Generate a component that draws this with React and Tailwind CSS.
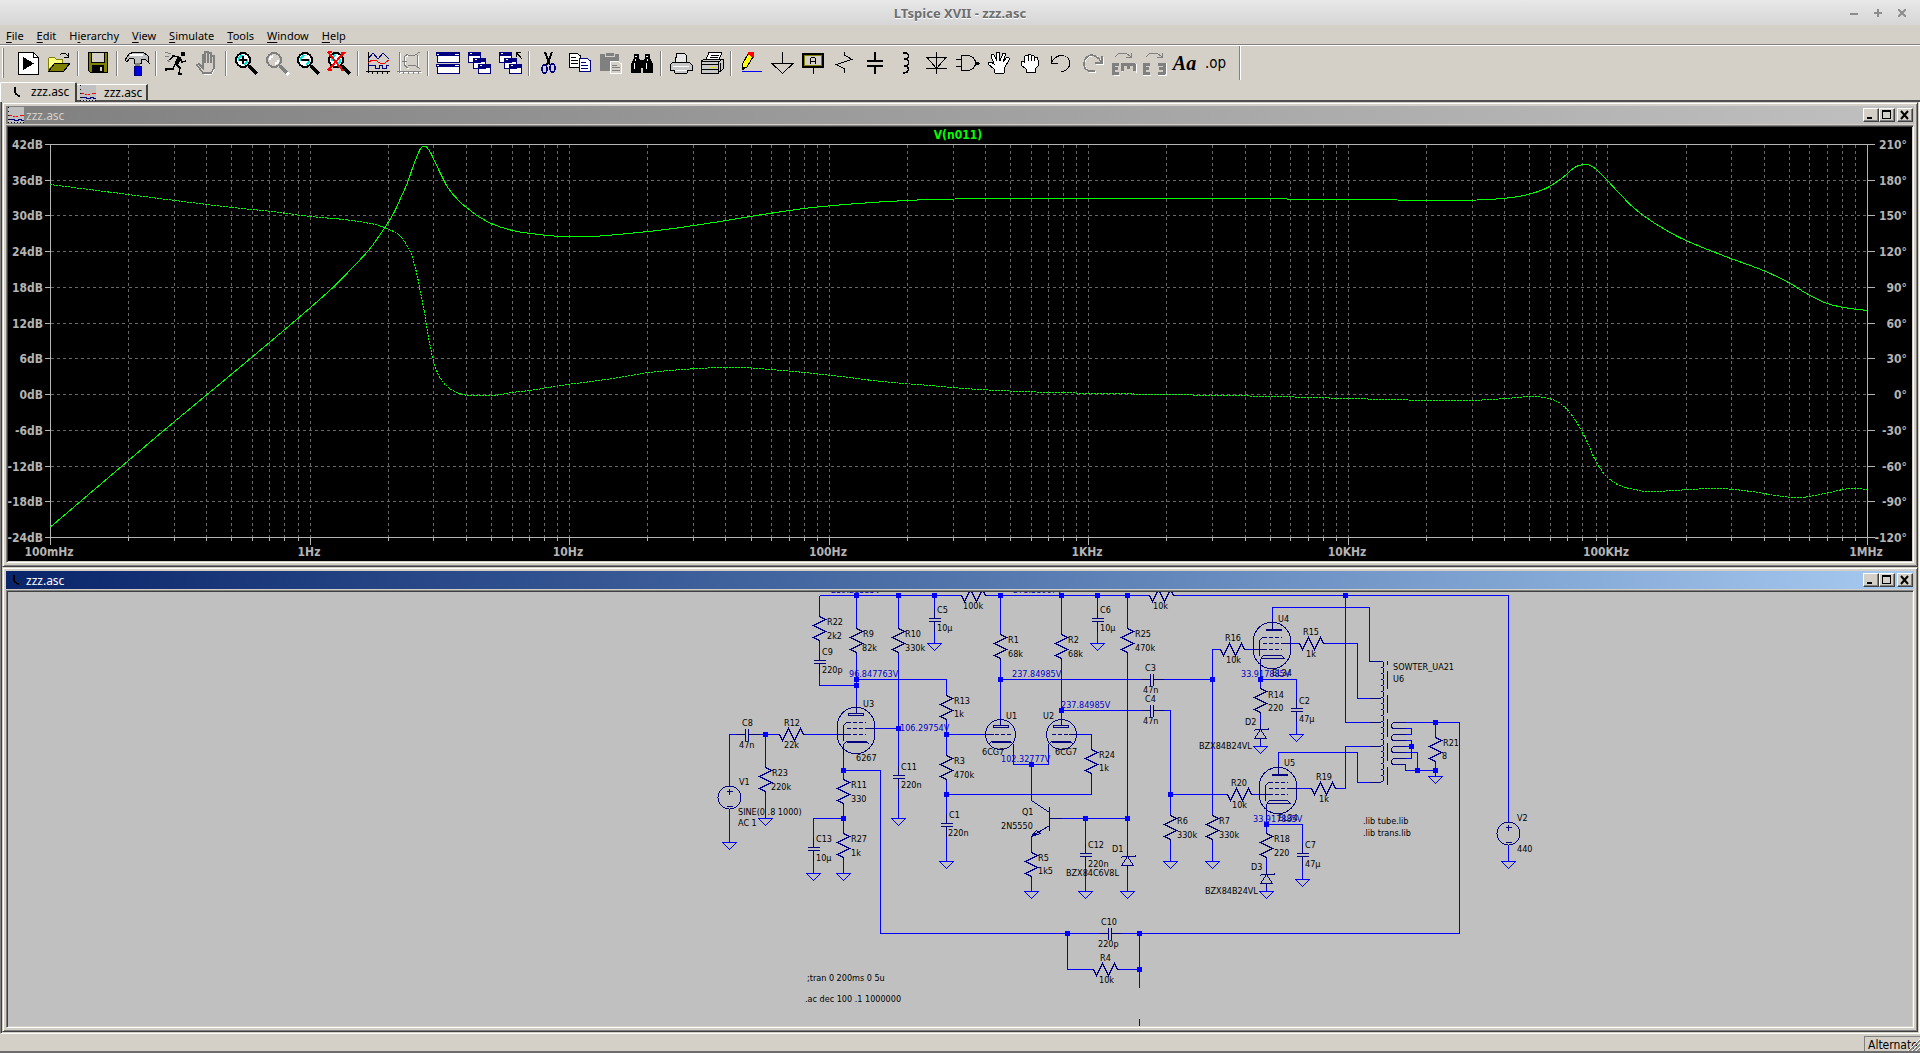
import { useState } from "react";

const GREY = "#808080";
const NAVY = "#000080";

/* ---------- toolbar icons, all on a 24x24 grid ---------- */

const Magnifier = ({ color = "#000", glass = "#d4d0c8", children }) => (
  <>
    <circle cx="9" cy="9" r="7" fill={glass} stroke={color} strokeWidth="2" />
    <path d="M5 10V7L8 4M13 8V11L10 14" stroke="#00e5e5" strokeWidth="2" fill="none" />
    <path d="M15 15L23 23" stroke={color} strokeWidth="3" />
    {children}
  </>
);

const Cascade = () => (
  <>
    <path d="M1 1H13V11H1ZM6 7H18V17H6ZM11 13H23V22H11Z" fill="#fff" stroke={NAVY} />
    <path d="M1 1H13V4H1ZM6 7H18V10H6ZM11 13H23V16H11Z" fill={NAVY} stroke={NAVY} />
    <path d="M3 2.5H5M8 8.5H10M13 14.5H15" stroke="#fff" />
  </>
);

const Hand = ({ open }) =>
  open ? (
    <path
      d="M8 22L7 18L1 13L1 11L4 11L7 13L4 5L5 3L7 4L10 10L9 1L12 1L13 10L16 2L18 2L18 5L16 11L20 6L22 7L22 9L18 16L17 22Z"
      fill="#fff"
      stroke="#000"
    />
  ) : (
    <path
      d="M8 21V18L3 14V10L6 10V6L8 4L10 5L11 3L13 4L15 4L17 6L19 6L20 9V15L17 18V21Z M10 5V10M13 4V10M16 6V10M6 10V12"
      fill="#fff"
      stroke="#000"
    />
  );

const icons = {
  Run: (
    <>
      <path d="M2 1H17L22 6V23H2Z" fill="#fff" stroke="#000" />
      <path d="M17 1V6H22" fill="none" stroke="#000" />
      <path d="M7 6V19L18 12.5Z" fill="#000" />
    </>
  ),
  Open: (
    <>
      <path d="M1 20V8L3 6H7L9 8H15V12H8Z" fill="#ffff80" stroke="#808000" />
      <path d="M2 20L8 12H23L17 20Z" fill="#808000" stroke="#000" />
      <path d="M13 4L15 2H18L21 5M21 2V6H17" fill="none" stroke="#000" />
    </>
  ),
  Save: (
    <>
      <path d="M2 1H21V21H4L2 19Z" fill="#808000" stroke="#000" />
      <path d="M5 1H18V11H5Z" fill="#d4d0c8" stroke="#000" />
      <path d="M6 14H18V21H6Z" fill="#000" />
      <path d="M14 16H16V20H14Z" fill="#d4d0c8" />
    </>
  ),
  "Control Panel": (
    <>
      <path d="M0 9L4 3L9 1H18L23 5L24 12L20 8L16 8V12H9V8L5 7L2 11Z" fill="#c0c0c0" stroke="#000" />
      <path d="M5 4H18" stroke="#fff" strokeWidth="2" />
      <path d="M10 12H15V15H10Z" fill="#808080" />
      <path d="M9 15H16V24H9Z" fill="#0000e0" stroke={NAVY} />
    </>
  ),
  Simulate: (
    <>
      <circle cx="19" cy="3" r="2.5" fill="#000" />
      <path d="M16 6L12 13" stroke="#000" strokeWidth="4" />
      <path d="M15 6L9 5L6 9M16 7L18 11L22 10M12 13L16 17L15 23H18M11 13L9 18L2 18V20" fill="none" stroke="#000" strokeWidth="1.5" />
      <path d="M1 1L7 3M1 5L5 6M3 9L6 11" stroke={GREY} />
    </>
  ),
  Halt: (
    <>
      <path d="M8 23L2 14L4 13L8 17V4H10V12V2H13V12V3H16V12V6H19V17L16 23Z" fill="#fff" transform="translate(1 1)" />
      <path d="M8 22L2 14L4 13L8 17V4H10V12V1H13V12V2H16V12V5H19V17L16 22Z" fill="#d4d0c8" stroke={GREY} strokeWidth="1.5" />
    </>
  ),
  "Zoom in": (
    <Magnifier glass="#fff">
      <path d="M5 9H13M9 5V13" stroke="#000" strokeWidth="2" />
    </Magnifier>
  ),
  Pan: (
    <>
      <path d="M16 16L24 24" stroke="#fff" strokeWidth="3" />
      <circle cx="9" cy="9" r="7" fill="none" stroke={GREY} strokeWidth="2" />
      <path d="M5 9V7L8 5M13 9V11L10 13" stroke="#fff" strokeWidth="2" fill="none" />
      <path d="M15 15L22 22" stroke={GREY} strokeWidth="3" />
    </>
  ),
  "Zoom out": (
    <Magnifier glass="#fff">
      <path d="M5 9H13" stroke="#000" strokeWidth="2" />
    </Magnifier>
  ),
  "Zoom to fit": (
    <Magnifier glass="#fff">
      <path d="M1 1L16 20M18 1L1 19M1 1H5M14 2H18M1 19H5" stroke="#f00" strokeWidth="2" />
    </Magnifier>
  ),
  "Pick visible traces": (
    <>
      <path d="M2.5 1V22M0 20.5H24M6.5 20V23M11.5 20V23M16.5 20V23M21.5 20V23" stroke="#000" fill="none" />
      <path d="M2 8L7 2L12 8L17 2L23 8" stroke={NAVY} fill="none" />
      <path d="M2 12L6 9L9 9L14 12H19L23 9" stroke="#f00" fill="none" />
      <path d="M2 14.500H9.500V17.500H13.500V14.500H16.500V17.500H20.500V14.500H23" stroke={NAVY} fill="none" />
    </>
  ),
  Autorange: (
    <>
      <path d="M3.5 2V23M1 21.5H25" stroke="#fff" />
      <path d="M2.5 1V22M0 20.5H24M6.5 20V23M11.5 20V23M16.5 20V23M21.5 20V23" stroke={GREY} />
      <path d="M12 4L8 7V15L12 18M21 5V16" stroke="#fff" fill="none" />
      <path d="M11 3L7 6V14L11 17M23 1L18 4L11 5M23 18L18 14L11 15M20 4V15M5 10H10" stroke={GREY} fill="none" />
    </>
  ),
  "Tile windows": (
    <>
      <path d="M1 2H23V11H1ZM1 14H23V22H1Z" fill="#fff" stroke={NAVY} />
      <path d="M0 1H24V5H0ZM0 13H24V16H0Z" fill={NAVY} />
      <path d="M1 3H3M19 3H23M1 14.5H3M19 14.5H23" stroke="#fff" />
    </>
  ),
  "Cascade windows": <Cascade />,
  "Close all": (
    <>
      <Cascade />
      <path d="M15 0H24V6H15Z" fill="#d4d0c8" />
      <path d="M18.5 1V6M18 1.5H23M18 1L24 8" stroke="#000" fill="none" />
    </>
  ),
  Cut: (
    <>
      <path d="M8 1L13 14M15 1L10 14" stroke="#000" strokeWidth="2" />
      <ellipse cx="7.5" cy="18" rx="2.5" ry="4" fill="none" stroke={NAVY} strokeWidth="1.5" />
      <ellipse cx="15.5" cy="17" rx="2.5" ry="4" fill="none" stroke={NAVY} strokeWidth="1.5" />
    </>
  ),
  Copy: (
    <>
      <path d="M1.5 2.5H9L12.5 5V16.5H1.5Z" fill="#fff" stroke="#000" />
      <path d="M3 6.5H8M3 9.5H10M3 12.5H10" stroke="#000" />
      <path d="M11.5 7.5H19L22.5 10V20.5H11.5Z" fill="#fff" stroke={NAVY} />
      <path d="M13 11.5H18M13 14.5H20M13 17.5H20" stroke={NAVY} />
    </>
  ),
  Paste: (
    <>
      <path d="M1 3H20V20H1Z" fill={GREY} />
      <path d="M6 1H15V5H6Z" fill={GREY} stroke="#d4d0c8" />
      <path d="M11.5 10.5H19L22.5 13V22.5H11.5Z" fill="#d4d0c8" stroke="#fff" />
      <path d="M13 14.5H18M13 16.5H21M13 19.5H21" stroke={GREY} />
    </>
  ),
  Find: (
    <>
      <path d="M4 3H9V7L11 12V22H1V13L4 7ZM15 3H20V7L23 13V22H13V12L15 7Z" fill="#000" />
      <path d="M10 9H14V17H10Z" fill="#000" />
      <path d="M5 5H7M16 5H18M4 12V18M16 12V18M5 8V10M17 8V10" stroke="#fff" />
    </>
  ),
  Print: (
    <>
      <path d="M6 11L8 2H15L18 5L17 11" fill="#e8e8e8" stroke="#000" />
      <path d="M1 14L4 11H20L23 14V19H19L18 22H6L5 19H1Z" fill="#c8c8c8" stroke="#000" />
      <path d="M4 15H20M6 19H18" stroke="#fff" />
    </>
  ),
  "Print setup": (
    <>
      <path d="M6 9L9 1H22L19 9" fill="#fff" stroke="#000" />
      <path d="M11 4H19M10 6H18" stroke="#000" />
      <path d="M1 10H18V22H1ZM1 10L5 8H23L18 11M23 8V18L18 22" fill="#c8c8c8" stroke="#000" />
      <path d="M1 13H18M1 18H18M20 12V19" stroke="#000" />
      <path d="M10 16H15" stroke="#e0e000" />
    </>
  ),
  Wire: (
    <>
      <path d="M3 14L9 3L14 6L8 16L3 18Z" fill="#ff0" stroke="#000" />
      <path d="M9 3L10 1H14V6Z" fill="#f00" stroke="#f00" />
      <path d="M3 15V19L6 17" fill="#000" stroke="#000" />
      <path d="M3 20.5H23" stroke="#00f" />
    </>
  ),
  Ground: <path d="M12.5 1V12M1 12H24M2 12.5L12.5 22.5L23 12.5" fill="none" stroke="#000" />,
  "Label net": (
    <>
      <path d="M2 3H22V16H2Z" fill="none" stroke="#000" strokeWidth="2" />
      <path d="M3.5 4.5H20.500V14.500H3.500Z" fill="none" stroke="#808000" />
      <path d="M9.5 13V7.500L10.500 6.500H13.500L14.500 7.500V13M9 10.500H15M12.500 16V23" fill="none" stroke="#000" />
    </>
  ),
  Resistor: <path d="M12.5 1V4L20 8.500L4.500 13.500L12.500 18V22" fill="none" stroke="#000" />,
  Capacitor: <path d="M12 1V9M4 10H20M4 15H20M12 15V23" fill="none" stroke="#000" strokeWidth="2" />,
  Inductor: <path d="M9 2H11C16 2 16 8 10 8C16 8 16 15 10 15C16 15 16 22 9 22" fill="none" stroke="#000" strokeWidth="1.5" />,
  Diode: <path d="M11.5 1V23M1 6.500H22M1 17.500H22M2 6.500L11.500 17.500L21 6.500" fill="none" stroke="#000" />,
  Component: (
    <>
      <path d="M5.5 4.5H12C17 4.500 19.500 9 19.500 12C19.500 15 17 19.500 12 19.500H5.500Z" fill="none" stroke="#000" />
      <path d="M0 8.5H5M0 15.5H5M19 12H24" stroke="#000" />
      <path d="M20 11H23V14H20Z" fill="#000" />
    </>
  ),
  Move: <Hand open />,
  Drag: <Hand />,
  Undo: <path d="M2.5 5V12.5H9M2.500 12C5 6 9 4.500 13 4.500C22 5 24 17 14 20.500H12" fill="none" stroke="#000" />,
  Redo: (
    <>
      <path d="M23 6V13H16M22 12C18 5 14 4 11 5C3 7 2 17 10 21H16" fill="none" stroke="#fff" strokeWidth="1.5" />
      <path d="M22 5V12H15M22 12C18 5 14 4 11 4C3 6 1 17 9 20H15" fill="none" stroke={GREY} strokeWidth="1.5" />
    </>
  ),
  Rotate: (
    <>
      <path d="M3 24H9M11 21V17M25 13V22" fill="none" stroke="#fff" />
      <path d="M2 12V23M1 13H8M2 17H7M1 22H8M10 13H24M11 13V20M17 13V18M23 13V20" stroke={GREY} strokeWidth="3" fill="none" />
      <path d="M4 6L8 2H15L20 6M20 2V6H15" fill="none" stroke={GREY} />
    </>
  ),
  Mirror: (
    <>
      <path d="M1 24H9M16 24H24V12" fill="none" stroke="#fff" />
      <path d="M2 12V23M1 13H8M2 17H7M1 22H8M22 12V23M16 13H23M17 17H23M16 22H23" stroke={GREY} strokeWidth="3" fill="none" />
      <path d="M4 6L8 2H15L20 6M20 2V6H15" fill="none" stroke={GREY} />
    </>
  ),
};

const toolbar = [
  ["Run", "Open"],
  ["Save"],
  ["Control Panel"],
  ["Simulate", "Halt"],
  ["Zoom in", "Pan", "Zoom out", "Zoom to fit"],
  ["Pick visible traces", "Autorange"],
  ["Tile windows", "Cascade windows", "Close all"],
  ["Cut", "Copy", "Paste", "Find"],
  ["Print", "Print setup"],
  ["Wire", "Ground", "Label net", "Resistor", "Capacitor", "Inductor", "Diode", "Component", "Move", "Drag", "Undo", "Redo", "Rotate", "Mirror", "Text", "SPICE directive"],
];

const Separator = () => (
  <div className="flex w-2 justify-center">
    <div className="h-[25px] w-[2px] border-l border-[#808080] bg-white" />
  </div>
);

const ToolButton = ({ name }) => (
  <button type="button" aria-label={name} className="flex h-[30px] w-[31px] items-center justify-center">
    {name === "Text" && <span className="font-['Liberation_Serif'] text-[20px] leading-none font-bold italic">Aa</span>}
    {name === "SPICE directive" && <span className="font-['DejaVu_Sans_Condensed','DejaVu_Sans'] text-[15px] leading-none">.op</span>}
    {icons[name] && (
      <svg viewBox="0 0 24 24" className="size-6 overflow-visible" shapeRendering="crispEdges">
        {icons[name]}
      </svg>
    )}
  </button>
);

const Toolbar = () => (
  <div className="flex h-[34px] shrink-0 items-center overflow-hidden">
    <div className="mr-2 ml-[2px] h-[30px] w-[2px] border-r border-[#808080] bg-white" />
    {toolbar.map((group, i) => (
      <div key={i} className="flex shrink-0 items-center">
        {i > 0 && <Separator />}
        {group.map((name) => (
          <ToolButton key={name} name={name} />
        ))}
      </div>
    ))}
    <div className="ml-2 h-full w-[2px] border-l border-[#808080] bg-white" />
  </div>
);

/* ---------- window chrome ---------- */

const PlotIcon = () => (
  <svg viewBox="0 0 16 16" className="size-4 shrink-0" shapeRendering="crispEdges">
    <path d="M0 0H16V16H0Z" fill="#c0c0c0" />
    <path d="M0.5 0V16" stroke="#000" strokeDasharray="1 3" />
    <path d="M1 8.5H4M5 9.5H7M8 9.5H10M12 8.5H16" stroke="#f00" fill="none" />
    <path d="M1 12.5H6V13.5H10V12.5H13V13.5H16" stroke={NAVY} fill="none" />
    <path d="M0 15.5H16" stroke="#000" strokeDasharray="1 2" />
  </svg>
);

const SchematicIcon = () => (
  <svg viewBox="0 0 16 16" className="size-4 shrink-0" shapeRendering="crispEdges">
    <path d="M5 3H7V9H5ZM6 9H8V11H6ZM8 10H9V12H8ZM9 11H11V13H9Z" fill="#000" />
  </svg>
);

const CaptionButton = ({ label, children }) => (
  <button
    type="button"
    aria-label={label}
    className="flex h-[14px] w-4 items-center justify-center border border-t-white border-r-[#404040] border-b-[#404040] border-l-white bg-[#d4d0c8] shadow-[inset_-1px_-1px_#808080]"
  >
    <svg viewBox="0 0 14 12" className="h-3 w-[14px]" fill="none" stroke="#000" shapeRendering="crispEdges">
      {children}
    </svg>
  </button>
);

const MdiWindow = ({ title, active, icon, children }) => (
  <section className="flex min-h-0 flex-1 flex-col border border-t-[#d4d0c8] border-r-[#404040] border-b-[#404040] border-l-[#d4d0c8] bg-[#d4d0c8] p-[3px] shadow-[inset_1px_1px_#fff,inset_-1px_-1px_#808080]">
    <header
      className={
        "mb-px flex h-[18px] shrink-0 items-center bg-linear-to-r pr-px pl-[2px] font-['Noto_Sans'] text-[12px] leading-4 " +
        (active ? "from-[#0a246a] to-[#a6caf0] text-white" : "from-[#808080] to-[#c0c0c0] text-[#d4d0c8]")
      }
    >
      {icon}
      <h2 className="flex-1 pt-[2px] pl-[2px]">{title}</h2>
      <CaptionButton label="Minimize">
        <path d="M3 9H8" strokeWidth="2" />
      </CaptionButton>
      <CaptionButton label="Maximize">
        <path d="M2.5 2.5H10.5V9.5H2.5Z" />
        <path d="M2 2H11" strokeWidth="2" />
      </CaptionButton>
      <div className="w-[2px]" />
      <CaptionButton label="Close">
        <path d="M3 2L10 10M10 2L3 10" strokeWidth="2" shapeRendering="auto" />
      </CaptionButton>
    </header>
    <div className="min-h-0 flex-1 border border-t-[#808080] border-r-white border-b-white border-l-[#808080] p-px shadow-[inset_1px_1px_#404040,inset_-1px_-1px_#d4d0c8]">
      {children}
    </div>
  </section>
);

/* ---------- bode plot ---------- */

const X0 = 50;
const X1 = 1867;
const Y0 = 144;
const Y1 = 537;
const decade = (X1 - X0) / 7;
const dbLabels = [42, 36, 30, 24, 18, 12, 6, 0, -6, -12, -18, -24];
const degLabels = [210, 180, 150, 120, 90, 60, 30, 0, -30, -60, -90, -120];
const freqLabels = ["100mHz", "1Hz", "10Hz", "100Hz", "1KHz", "10KHz", "100KHz", "1MHz"];
const rowY = (i) => Math.round(Y0 + ((Y1 - Y0) * i) / 11);

const gain = [
  [50, 526.5], [118, 468.5], [174, 421], [232, 373], [282, 331], [310, 307],
  [334, 285.5], [354, 265], [370, 247.5], [384, 227.5], [393, 213], [400, 198], [407, 182], [414, 162], [419.5, 149], [422.5, 146],
  [425.5, 146], [430, 152], [434, 160.5], [441, 175], [448, 188], [459, 201], [468, 208.5], [478, 216], [493, 224], [512, 230],
  [530, 233], [560, 236], [590, 236], [612, 234.5], [661, 229.5], [710, 222.5], [759, 214.5], [808, 207.5], [857, 203], [906, 200],
  [955, 198.5], [1078, 198], [1224, 198], [1347, 199], [1445, 200], [1488, 199], [1518, 196], [1543, 189], [1561, 178],
  [1574, 167], [1583, 164], [1592, 166], [1604, 177], [1619, 193], [1634, 208], [1653, 222], [1677, 236], [1702, 247],
  [1733, 259], [1763, 270], [1788, 282], [1806, 293], [1824, 302], [1843, 307], [1867, 310],
];

const phase = [
  [50, 184], [96, 190], [128, 194], [174, 200], [232, 207], [271, 211], [310, 216], [343, 219], [364, 222], [378, 225],
  [393, 231], [400, 236], [407, 246], [411, 254], [416, 272], [420, 292], [424, 312], [426, 325], [429, 342], [434, 364],
  [440, 378], [448, 387], [459, 393], [470, 395], [493, 395], [512, 392], [536, 389], [560, 385], [612, 378], [649, 372],
  [698, 368], [735, 367], [771, 369], [832, 375], [881, 381], [930, 385], [979, 389], [1053, 392], [1163, 394], [1273, 396],
  [1347, 398], [1432, 400], [1469, 400], [1506, 398], [1530, 396], [1549, 398], [1561, 404], [1573, 417], [1585, 438],
  [1595, 460], [1606, 476], [1619, 485], [1634, 489], [1653, 491], [1714, 488], [1751, 491], [1775, 495], [1800, 497],
  [1824, 493], [1849, 488], [1867, 489],
];

// Catmull-Rom through the sampled points
const smooth = (pts) => {
  let d = `M${pts[0][0]} ${pts[0][1]}`;
  for (let i = 0; i < pts.length - 1; i++) {
    const [a, b, c, e] = [pts[i - 1] || pts[i], pts[i], pts[i + 1], pts[i + 2] || pts[i + 1]];
    d += `C${b[0] + (c[0] - a[0]) / 6} ${b[1] + (c[1] - a[1]) / 6} ${c[0] - (e[0] - b[0]) / 6} ${c[1] - (e[1] - b[1]) / 6} ${c[0]} ${c[1]}`;
  }
  return d;
};

const minorX = [];
for (let d = 0; d < 7; d++) {
  for (let k = 1; k < 10; k++) {
    if (d || k > 1) minorX.push(Math.round(X0 + decade * (d + Math.log10(k))));
  }
}

const Plot = () => (
  <svg
    viewBox="8 127 1904 434"
    className="block h-full w-full bg-black font-['DejaVu_Sans_Condensed','DejaVu_Sans'] text-[12px] font-bold"
    role="img"
    aria-label="V(n011)"
  >
    <g transform="translate(.5 .5)" fill="none" shapeRendering="crispEdges">
      <g stroke="#686868" strokeDasharray="3 3">
        {minorX.map((x) => (
          <path key={x} d={`M${x} ${Y0}V${Y1}`} />
        ))}
        {dbLabels.slice(1, -1).map((db, i) => (
          <path key={db} d={`M${X0} ${rowY(i + 1)}H${X1}`} />
        ))}
      </g>
      <g stroke="#b4b4b4">
        <path d={`M${X0} ${Y0}H${X1}V${Y1}H${X0}Z`} />
        {minorX.map((x) => (
          <path key={x} d={`M${x} ${Y1}v3`} />
        ))}
        {freqLabels.map((f, i) => (
          <path key={f} d={`M${Math.round(X0 + decade * i)} ${Y1}v7`} />
        ))}
        {dbLabels.map((db, i) => (
          <path key={db} d={`M${X0 - 6} ${rowY(i)}H${X0}M${X1} ${rowY(i)}h7`} />
        ))}
      </g>
      <path d={smooth(gain)} stroke="#0f0" />
      <path d={smooth(phase)} stroke="#0f0" strokeDasharray="2 1" />
    </g>
    <g fill="#b4b4b4">
      {dbLabels.map((db, i) => (
        <text key={db} x="43" y={rowY(i) + 5} textAnchor="end">{db}dB</text>
      ))}
      {degLabels.map((deg, i) => (
        <text key={deg} x="1907" y={rowY(i) + 5} textAnchor="end">{deg}°</text>
      ))}
      {freqLabels.map((f, i) => (
        <text key={f} x={Math.round(X0 + decade * i) - 1} y="556" textAnchor="middle">{f}</text>
      ))}
    </g>
    <text x="958" y="139" textAnchor="middle" fill="#0f0">V(n011)</text>
  </svg>
);

/* ---------- schematic ---------- */

const wires = [
  "M819 595H961M985 595H1148M1173 595H1508V821M1508 845V861",
  "M819 595V616M819 640V660M819 663V685H856M856 595V628M856 652V713",
  "M898 595V628M898 652V775M898 778V818M934 595V618M934 621V643",
  "M843 770H880V933H1108M1111 933H1459V722H1405",
  "M856 679H946V695M946 719V755M946 779V823M946 826V861M946 734H985",
  "M946 794H1091V773M1091 749V734H1075M1000 595V634M1000 658V725M1000 679H1150M1153 679H1212",
  "M1220 649H1212V815M1212 839V861M1061 595V634M1061 658V725M1061 710H1150M1153 710H1170V815M1170 839V861",
  "M1097 595V618M1097 621V643M1127 595V628M1127 652V856M1127 865V891",
  "M1013 744V764H1048V744M1031 764V800M1031 836V852M1031 876V891M1055 818H1127M1085 818V853M1085 856V891",
  "M729 785V734H745M748 734H779M803 734H837M729 808V842M765 734V767M765 791V818",
  "M843 744V779M843 803V833M843 857V873M843 818H813V847M813 850V873M874 728H898",
  "M1244 649H1254M1272 630V607H1369V661H1380M1290 643H1299M1323 643H1357V698H1380M1345 595V722H1380",
  "M1335 788H1345V746H1380M1278 775V752H1357V782H1380M1296 788H1311M1260 660V688M1260 712V729M1260 738V746",
  "M1260 679H1296V708M1296 711V734M1266 805V833M1266 857V874M1266 883V891M1266 824H1302V853M1302 856V879",
  "M1170 794H1227M1251 794H1260M1435 722V737M1435 761V776M1405 728H1411V734H1405M1405 740H1411V758H1405",
  "M1405 746H1411M1405 752H1417V770M1405 764V770H1435M1067 933V969H1093M1117 969H1139M1139 933V987M1139 1018V1027",
];

const junctions = [
  [856, 595], [898, 595], [934, 595], [1000, 595], [1061, 595], [1097, 595], [1127, 595], [1345, 595],
  [856, 679], [856, 685], [765, 734], [898, 728], [946, 734], [843, 770], [843, 818], [946, 794],
  [1000, 679], [1061, 710], [1031, 764], [1085, 818], [1127, 818], [1212, 679], [1170, 794], [1260, 679],
  [1266, 824], [1435, 722], [1435, 770], [1417, 770], [1411, 746], [1067, 933], [1139, 933], [1139, 969],
];

const grounds = [
  [934, 643], [1097, 643], [729, 842], [765, 818], [898, 818], [813, 873], [843, 873], [946, 861], [1031, 891], [1085, 891],
  [1127, 891], [1170, 861], [1212, 861], [1296, 734], [1302, 879], [1260, 746], [1266, 891], [1435, 776], [1508, 861],
];

const resistorsV = [
  [819, 616], [856, 628], [898, 628], [1000, 634], [1061, 634], [1127, 628], [946, 695], [946, 755], [1091, 749], [843, 779],
  [843, 833], [1031, 852], [765, 767], [1170, 815], [1212, 815], [1260, 688], [1266, 833], [1435, 737],
];
const resistorsH = [[779, 734], [961, 595], [1149, 595], [1220, 649], [1299, 643], [1227, 794], [1311, 788], [1093, 969]];
const capsV = [[819, 660], [934, 618], [1097, 618], [898, 775], [813, 847], [946, 823], [1085, 853], [1296, 708], [1302, 853]];
const capsH = [[745, 734], [1150, 679], [1150, 710], [1108, 933]];
const zeners = [[1127, 856], [1260, 729], [1266, 874]];
const sources = [[729, 797], [1508, 833]];
const coilY = Array.from({ length: 20 }, (_, i) => 661 + 6 * i);

const labels = [
  ["C5", 937, 613], ["10µ", 937, 631], ["100k", 963, 609], ["R9", 863, 637], ["82k", 862, 651], ["R10", 905, 637],
  ["330k", 905, 651], ["R22", 827, 625], ["2k2", 827, 639], ["C9", 822, 655], ["220p", 822, 673], ["U3", 863, 707],
  ["R13", 954, 704], ["1k", 954, 717], ["U1", 1006, 719], ["U2", 1043, 719], ["6CG7", 982, 755], ["6CG7", 1055, 755],
  ["R24", 1099, 758], ["1k", 1099, 771], ["C8", 742, 726], ["47n", 739, 748], ["R12", 784, 726], ["22k", 784, 748],
  ["R23", 772, 776], ["220k", 771, 790], ["V1", 739, 785], ["SINE(0 .8 1000)", 738, 815], ["AC 1", 738, 826],
  ["6267", 856, 761], ["R11", 851, 788], ["330", 851, 802], ["C11", 901, 770], ["220n", 901, 788], ["C13", 816, 842],
  ["10µ", 816, 861], ["R27", 851, 842], ["1k", 851, 856], ["R3", 954, 764], ["470k", 954, 778], ["C1", 949, 818],
  ["220n", 948, 836], ["Q1", 1022, 815], ["2N5550", 1001, 829], ["R5", 1038, 861], ["1k5", 1038, 874], ["C12", 1088, 848],
  ["220n", 1088, 867], ["BZX84C6V8L", 1066, 876], ["D1", 1112, 852], ["R1", 1008, 643], ["68k", 1008, 657],
  ["R2", 1068, 643], ["68k", 1068, 657], ["C6", 1100, 613], ["10µ", 1100, 631], ["R25", 1135, 637], ["470k", 1135, 651],
  ["C3", 1145, 671], ["47n", 1143, 693], ["C4", 1145, 702], ["47n", 1143, 724], ["10k", 1153, 609], ["R6", 1177, 824],
  ["330k", 1177, 838], ["R7", 1219, 824], ["330k", 1219, 838], ["R16", 1225, 641], ["10k", 1226, 663], ["U4", 1278, 622],
  ["R15", 1303, 635], ["1k", 1306, 657], ["EL34", 1272, 676], ["R14", 1268, 698], ["220", 1268, 711], ["C2", 1299, 704],
  ["47µ", 1299, 722], ["D2", 1245, 725], ["BZX84B24VL", 1199, 749], ["U5", 1284, 766], ["R20", 1231, 786],
  ["10k", 1232, 808], ["R19", 1316, 780], ["1k", 1319, 802], ["EL34", 1278, 821], ["R18", 1274, 842], ["220", 1274, 856],
  ["C7", 1305, 848], ["47µ", 1305, 867], ["D3", 1251, 870], ["BZX84B24VL", 1205, 894], ["SOWTER_UA21", 1393, 670],
  ["U6", 1393, 682], ["R21", 1443, 746], ["8", 1442, 759], [".lib tube.lib", 1363, 824], [".lib trans.lib", 1363, 836],
  ["V2", 1517, 821], ["440", 1517, 852], ["C10", 1101, 925], ["220p", 1098, 947], ["R4", 1100, 961], ["10k", 1099, 983],
  [";tran 0 200ms 0 5u", 807, 981], [".ac dec 100 .1 1000000", 805, 1002],
];

const voltages = [
  ["259.28535V", 831, 593], ["378.58067V", 1013, 593], ["96.847763V", 849, 677], ["106.29754V", 900, 731],
  ["102.32777V", 1001, 762], ["237.84985V", 1012, 677], ["237.84985V", 1061, 708], ["33.917885V", 1241, 677],
  ["33.917885V", 1253, 822],
];

// origin: anode column, control grid row
const Pentode = ({ x, y, k = -12, hollow }) => (
  <g transform={`translate(${x} ${y})`}>
    <rect x="-19" y="-27" width="37" height="46" rx="18" />
    {hollow ? <path d="M-8 -21H7V-19H-8ZM0 -31V-21" /> : <path d="M-7 -19H9M-7 -20H9M0 -31V-20" />}
    <path d="M-10 -12H9M-10 -6H9M-10 0H9" strokeDasharray="4 2" />
    <path d="M9 -6H18M-19 0H-10M-10 -12L-13 -9V6L" />
    {hollow ? <path d="M-10 7H10M-10 8H10" /> : <path d="M-10 6H9M-12 9H12" />}
    <path d={`M-10 7L${k} 10V20M10 7L13 10`} />
  </g>
);

const Triode = ({ x, y, flip }) => (
  <g transform={`translate(${x} ${y}) scale(${flip ? -1 : 1} 1)`}>
    <circle r="15" />
    <path d="M-7 -9H8V-7H-7ZM0 -16V-9M-15 0H-7" />
    <path d="M-6 0H10" strokeDasharray="4 2" />
    <path d="M-9 7H10M-9 8H10M-9 7L-12 10M10 7L13 10V18" />
  </g>
);

const Schematic = () => (
  <svg
    viewBox="8 592 1904 434"
    className="block h-full w-full bg-[#c0c0c0] font-['DejaVu_Sans_Condensed','DejaVu_Sans'] text-[9px]"
    role="img"
    aria-label="zzz.asc"
  >
    <g transform="translate(.5 .5)" fill="none" shapeRendering="crispEdges">
      <path d={wires.join("")} stroke="#00f" />
      {grounds.map(([x, y]) => (
        <path key={`${x},${y}`} d={`M${x - 7} ${y}h14l-7 7z`} stroke="#00f" />
      ))}
      <g stroke={NAVY}>
        {resistorsV.map(([x, y]) => (
          <path key={`${x},${y}`} d={`M${x} ${y - 2}v2l6 3l-12 6l12 6l-12 6l6 3v2`} />
        ))}
        {resistorsH.map(([x, y]) => (
          <path key={`${x},${y}`} d={`M${x - 2} ${y}h2l3 6l6 -12l6 12l6 -12l3 6h2`} />
        ))}
        {capsV.map(([x, y]) => (
          <path key={`${x},${y}`} d={`M${x - 6} ${y}h12m-12 3h12M${x} ${y}v-10M${x} ${y + 3}v10`} />
        ))}
        {capsH.map(([x, y]) => (
          <path key={`${x},${y}`} d={`M${x} ${y - 6}v12m3 -12v12M${x} ${y}h-10M${x + 3} ${y}h10`} />
        ))}
        {zeners.map(([x, y]) => (
          <path key={`${x},${y}`} d={`M${x - 7} ${y + 2}l2 -2h12l2 -1M${x} ${y - 6}v6l6 9h-12l6 -9M${x} ${y + 9}v4`} />
        ))}
        {sources.map(([x, y]) => (
          <g key={x}>
            <circle cx={x} cy={y} r="11.5" />
            <path d={`M${x - 3} ${y - 6}h6m-3 -3v6M${x - 3} ${y + 9}h6`} />
          </g>
        ))}
        <Pentode x={856} y={734} k={-13} hollow />
        <Pentode x={1272} y={649} />
        <Pentode x={1278} y={794} />
        <Triode x={1000} y={734} />
        <Triode x={1061} y={734} flip />
        {/* Q1 */}
        <path d="M1049 806V830M1031 800L1049 812M1049 825L1031 836M1049 818H1061M1031 836L1036 830L1040 833Z" />
        {/* transformer */}
        <path d={coilY.map((y) => `M1380 ${y}q5 0 3 3q2 3 -3 3`).join("")} />
        <path d="M1369 661H1380M1369 698H1380M1369 722H1380M1369 746H1380M1369 782H1380" />
        <path d="M1387 660V664M1387 670V688M1387 694V712M1387 718V736M1387 742V760M1387 766V784" />
        {[722, 734, 746, 758].map((y) => (
          <path key={y} d={`M1405 ${y}h-12l-2 2v3l2 1h12`} />
        ))}
      </g>
      {junctions.map(([x, y]) => (
        <rect key={`${x},${y}`} x={x - 2} y={y - 2} width="4" height="4" fill="#00f" stroke="#00f" />
      ))}
    </g>
    <g fill="#000">
      {labels.map(([text, x, y]) => (
        <text key={`${x},${y}`} x={x} y={y}>{text}</text>
      ))}
    </g>
    <g fill="#0000c8">
      {voltages.map(([text, x, y]) => (
        <text key={`${x},${y}`} x={x} y={y}>{text}</text>
      ))}
    </g>
  </svg>
);

/* ---------- page ---------- */

const menus = [
  ["", "F", "ile"],
  ["", "E", "dit"],
  ["H", "i", "erarchy"],
  ["", "V", "iew"],
  ["", "S", "imulate"],
  ["", "T", "ools"],
  ["", "W", "indow"],
  ["", "H", "elp"],
];

const App = () => {
  const [tab, setTab] = useState(0);

  return (
    <div className="flex h-screen flex-col overflow-hidden bg-[#d4d0c8] font-['Noto_Sans',sans-serif] text-[12px] leading-4 text-black">
      {/* Title bar */}
      <header className="grid h-[25px] shrink-0 grid-cols-[1fr_auto_1fr] items-center bg-linear-to-b from-[#e8e8e8] to-[#d6d6d6]">
        <span />
        <h1 className="pt-px text-[13px] font-bold text-[#6e6e6e] [text-shadow:0_1px_#fff]">LTspice XVII - zzz.asc</h1>
        <div className="flex justify-end gap-4 pr-[14px] text-[#8c8c8c]">
          <button type="button" aria-label="Minimize window">
            <svg viewBox="0 0 8 8" className="size-2" stroke="currentColor" strokeWidth="2"><path d="M0 5H8" /></svg>
          </button>
          <button type="button" aria-label="Maximize window">
            <svg viewBox="0 0 8 8" className="size-2" stroke="currentColor" strokeWidth="2"><path d="M0 4H8M4 0V8" /></svg>
          </button>
          <button type="button" aria-label="Close window">
            <svg viewBox="0 0 8 8" className="size-2" stroke="currentColor" strokeWidth="2"><path d="M0 0L8 8M8 0L0 8" /></svg>
          </button>
        </div>
      </header>

      {/* Menu bar */}
      <nav className="flex h-[21px] shrink-0 items-center gap-[13px] border-b border-white px-[6px] pt-[2px] text-[11px] shadow-[inset_0_-1px_#808080]">
        {menus.map(([pre, key, post]) => (
          <button key={key + post} type="button">
            {pre}
            <span className="underline underline-offset-2">{key}</span>
            {post}
          </button>
        ))}
      </nav>

      <Toolbar />

      {/* Document tabs */}
      <div className="flex h-[22px] shrink-0 items-end">
        <button
          type="button"
          onClick={() => setTab(0)}
          className="flex h-5 w-[77px] items-center rounded-t-[2px] border-t border-r-2 border-l border-t-white border-r-[#404040] border-l-white pb-px pl-2"
        >
          <SchematicIcon />
          <span className="ml-[6px]">zzz.asc</span>
        </button>
        <div className="flex h-5 flex-1 items-end border-b-2 border-[#505050]">
          <button
            type="button"
            onClick={() => setTab(1)}
            className="flex h-4 w-[71px] items-center border-t border-r-2 border-t-white border-r-[#404040] pl-[3px]"
          >
            <PlotIcon />
            <span className="ml-2">zzz.asc</span>
          </button>
        </div>
      </div>

      <main className="flex min-h-0 flex-1 flex-col border-r border-b border-l border-r-white border-b-white border-l-[#808080] pr-px pb-px pl-px shadow-[inset_1px_0_#404040]">
        <MdiWindow title="zzz.asc" active={tab === 1} icon={<PlotIcon />}>
          <Plot />
        </MdiWindow>
        <MdiWindow title="zzz.asc" active={tab === 0} icon={<SchematicIcon />}>
          <Schematic />
        </MdiWindow>
      </main>

      {/* Status bar */}
      <footer className="flex h-[19px] shrink-0 justify-end border-b-2 border-[#6c6c6c] pt-[2px]">
        <div className="relative w-14 overflow-hidden border-t border-l border-[#808080] pt-px pl-[3px] font-['DejaVu_Sans_Condensed','DejaVu_Sans'] leading-[14px] whitespace-nowrap">
          Alternate
          <svg viewBox="0 0 12 12" className="absolute right-0 bottom-0 size-3">
            <path d="M1 12L12 1M5 12L12 5M9 12L12 9" stroke="#808080" strokeWidth="2" />
            <path d="M0 12L12 0M4 12L12 4M8 12L12 8" stroke="#fff" />
          </svg>
        </div>
      </footer>
    </div>
  );
};

export default App;
